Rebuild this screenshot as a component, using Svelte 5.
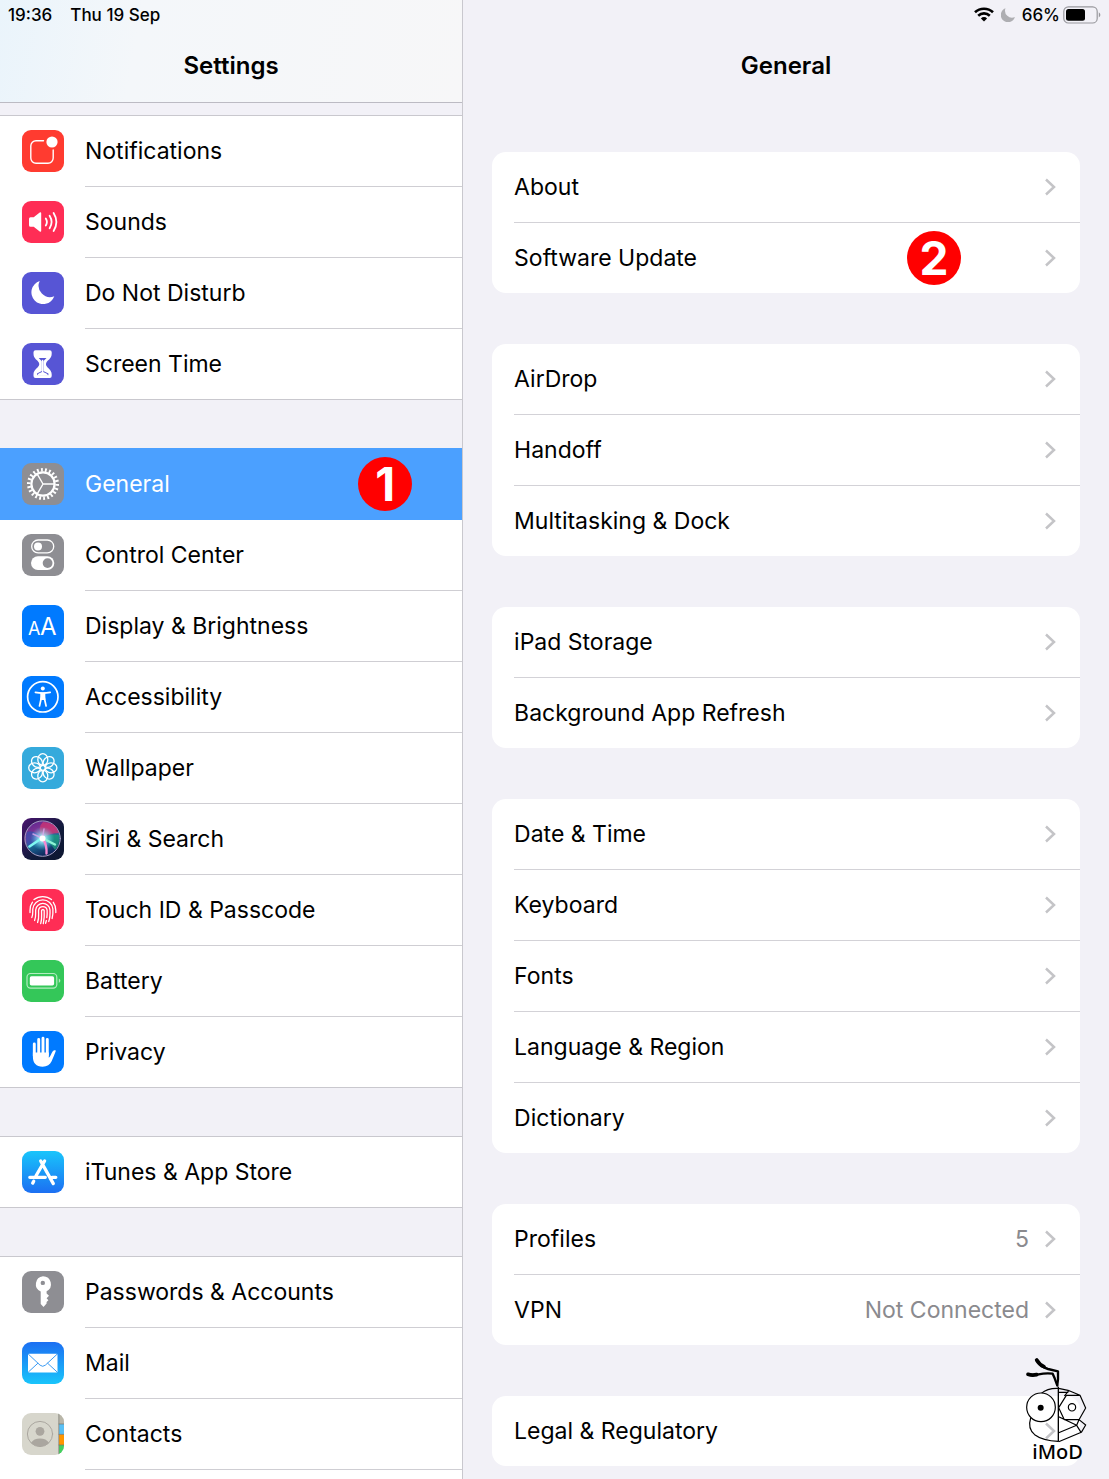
<script lang="ts">
	type Item = { label: string; icon: string; badge?: number };
	type Option = { label: string; value?: string; badge?: number };

	const sections: Item[][] = [
		[
			{ label: "Notifications", icon: "notifications" },
			{ label: "Sounds", icon: "sounds" },
			{ label: "Do Not Disturb", icon: "moon" },
			{ label: "Screen Time", icon: "hourglass" },
		],
		[
			{ label: "General", icon: "gear", badge: 1 },
			{ label: "Control Center", icon: "toggles" },
			{ label: "Display & Brightness", icon: "display" },
			{ label: "Accessibility", icon: "accessibility" },
			{ label: "Wallpaper", icon: "wallpaper" },
			{ label: "Siri & Search", icon: "siri" },
			{ label: "Touch ID & Passcode", icon: "touch" },
			{ label: "Battery", icon: "battery" },
			{ label: "Privacy", icon: "privacy" },
		],
		[{ label: "iTunes & App Store", icon: "appstore" }],
		[
			{ label: "Passwords & Accounts", icon: "key" },
			{ label: "Mail", icon: "mail" },
			{ label: "Contacts", icon: "contacts" },
		],
	];

	const cards: Option[][] = [
		[{ label: "About" }, { label: "Software Update", badge: 2 }],
		[{ label: "AirDrop" }, { label: "Handoff" }, { label: "Multitasking & Dock" }],
		[{ label: "iPad Storage" }, { label: "Background App Refresh" }],
		[
			{ label: "Date & Time" },
			{ label: "Keyboard" },
			{ label: "Fonts" },
			{ label: "Language & Region" },
			{ label: "Dictionary" },
		],
		[
			{ label: "Profiles", value: "5" },
			{ label: "VPN", value: "Not Connected" },
		],
		[{ label: "Legal & Regulatory" }],
	];

	const petals = [0, 45, 90, 135, 180, 225, 270, 315];

	let selected = $state("General");
</script>

{#snippet glyph(icon: string)}
	<svg class="icon {icon}" viewBox="0 0 42 42" fill="none" stroke-linecap="round" aria-hidden="true">
		{#if icon == "notifications"}
			<path d="M21.5 10.8H14a5.2 5.2 0 0 0-5.2 5.2v12a5.2 5.2 0 0 0 5.2 5.2h12a5.2 5.2 0 0 0 5.2-5.2v-8" stroke="#fff" stroke-width="1.4" />
			<circle cx="30" cy="12" r="5.6" fill="#fff" />
		{:else if icon == "sounds"}
			<path d="M8.5 16.3h3.2l6-4.9q1.5-.8 1.5.8v17.6q0 1.6-1.5.8l-6-4.9H8.5Q7 25.7 7 24.2v-6.4q0-1.5 1.5-1.5z" fill="#fff" />
			<path d="M23.8 17.5q2.2 3.5 0 7M27.6 14.8q4 6.2 0 12.4M31.6 12q5.6 9 0 18" stroke="#fff" stroke-width="1.8" />
		{:else if icon == "moon"}
			<path d="M17.7 9A11.8 11.8 0 1 0 32.3 24.3 11.4 11.4 0 0 1 17.7 9z" fill="#fff" />
		{:else if icon == "hourglass"}
			<path d="M13.5 7.3h14.2q2 0 2 2v1.5c0 5-4.3 6.5-5.3 8.7-.6 1.3-.6 2.1 0 3.2 1 2.2 5.3 4 5.3 8.7v1.5q0 2-2 2H13.5q-2 0-2-2v-1.5c0-4.7 4.3-6.5 5.3-8.7.6-1.1.6-1.9 0-3.2-1-2.2-5.3-3.7-5.3-8.7V9.3q0-2 2-2z" fill="#fff" />
			<path d="M16.7 15h7.8l-3.1 3.2V28l5 2.5v1.7H15v-1.7l4.8-2.5v-9.8z" fill="#5755d5" />
			<path d="M20.6 17.5v12" stroke="#fff" stroke-width="1.4" />
			<path d="M14.5 32.8q1.5-2.3 6.1-4 4.6 1.7 6.1 4z" fill="#fff" />
		{:else if icon == "gear"}
			<circle cx="21" cy="21" r="14.2" stroke="#fff" stroke-width="3.6" stroke-linecap="butt" pathLength="44" stroke-dasharray=".9 1.1" />
			<circle cx="21" cy="21" r="11.6" stroke="#fff" stroke-width="2.2" />
			<path d="M21 21h11M21 21l-5.6-9.7M21 21l-5.6 9.7" stroke="#fff" stroke-width="1.4" />
		{:else if icon == "toggles"}
			<rect x="9.7" y="6" width="22" height="12.8" rx="6.4" stroke="#fff" stroke-width="1.3" />
			<circle cx="16" cy="12.4" r="4" fill="#fff" />
			<rect x="9" y="22.2" width="23.3" height="13.8" rx="6.9" fill="#fff" />
			<circle cx="25.6" cy="29.1" r="4.9" fill="#8e8e93" />
		{:else if icon == "display"}
			<text x="6" y="30" font-size="18">A</text>
			<text x="18" y="30" font-size="24">A</text>
		{:else if icon == "accessibility"}
			<circle cx="20.8" cy="20.8" r="15.2" stroke="#fff" stroke-width="1.7" />
			<circle cx="20.8" cy="12.6" r="2" fill="#fff" />
			<path d="M13.4 16.3q7.4 1.6 14.8 0M17.5 30l1.8-8M24.1 30l-1.8-8" stroke="#fff" stroke-width="1.7" />
			<path d="M18.3 16.5h5l.1 7.5h-5.2z" fill="#fff" />
		{:else if icon == "wallpaper"}
			{#each petals as angle}
				<ellipse cx="20.8" cy="12.6" rx="5" ry="5.9" transform="rotate({angle} 20.8 20.8)" stroke="#fff" stroke-width="1.3" />
			{/each}
		{:else if icon == "siri"}
			<defs>
				<linearGradient id="siri-orb" x1=".2" y1="0" x2=".6" y2="1">
					<stop offset="0" stop-color="#5b2590" />
					<stop offset=".4" stop-color="#8c3a96" />
					<stop offset=".6" stop-color="#1b6d97" />
					<stop offset="1" stop-color="#0c1d55" />
				</linearGradient>
				<radialGradient id="siri-glow">
					<stop offset="0" stop-color="#fff" />
					<stop offset=".3" stop-color="#a9f4ff" stop-opacity=".8" />
					<stop offset="1" stop-color="#4cc8ee" stop-opacity="0" />
				</radialGradient>
			</defs>
			<circle cx="20.6" cy="20.6" r="17.7" fill="url(#siri-orb)" stroke="#a7a0c4" stroke-width="1" />
			<path d="M20 20Q15 9 21 4q12 0 16 11-9 0-17 5z" fill="#d8356f" opacity=".7" />
			<path d="M20 20q8-5 17-3 1 10-4 15-5-8-13-12z" fill="#1d9a7e" opacity=".8" />
			<path d="M20 20Q12 11 5 14q-3 8 2 15 4-8 13-9z" fill="#304fb0" opacity=".7" />
			<circle cx="20.5" cy="20.5" r="12" fill="url(#siri-glow)" />
			<path d="M20 20L7.500 28.500" stroke="#7ff8f2" stroke-width="2.600" />
			<path d="M20 20l13 6.500" stroke="#8df5d6" stroke-width="2.400" />
			<path d="M21 21q4 6 3.500 14.500" stroke="#f48ad2" stroke-width="2.400" />
			<path d="M20.500 20l1.500-9M20 20l-9-4" stroke="#dca7ee" stroke-width="1.500" opacity=".8" />
			<circle cx="20.500" cy="20.500" r="3" fill="#fff" />
		{:else if icon == "touch"}
			<g stroke="#fff" stroke-width="1.3">
				<path d="M12 10.6a14 14 0 0 1 17.5 0" />
				<path d="M8 23.5v-2a12.8 12.8 0 0 1 2.5-8.3M31.3 13.3a13 13 0 0 1 2.5 8.2v2" />
				<path d="M9.8 28.5c1.5-3 .7-5.7 1-8.5a10.1 10.1 0 0 1 20.1 0c.2 4 .1 6.5-.8 9.5" />
				<path d="M12.6 31.5c1.7-4 .8-7.5 1.1-10.7a7.2 7.2 0 0 1 14.3 0c.2 5 0 8.5-1.3 11.7" />
				<path d="M15.6 33.5c1.9-5 .7-9 1-12.3a4.3 4.3 0 0 1 8.5 0c.2 3 .1 5.3-.3 7.5" />
				<path d="M18.7 34.6c1.7-5 .6-10 .9-13a1.4 1.4 0 0 1 2.6 0c.3 5 0 9-.9 13M24.4 31.5l-.8 2.8" />
			</g>
		{:else if icon == "battery"}
			<rect x="5" y="13.5" width="29.8" height="14.6" rx="3.6" stroke="#b3ebc0" stroke-width="1.2" />
			<rect x="7.8" y="16.2" width="24.3" height="9.2" rx="1.7" fill="#fff" />
			<path d="M36.8 18.6q3.2 2.2 0 4.4z" fill="#b3ebc0" />
		{:else if icon == "privacy"}
			<path d="M12.3 13v12M16.7 8.5V24M21 7.2V24M25.3 8.5V24" stroke="#fff" stroke-width="2.9" />
			<path d="M10.9 21.5h15.9v5.3c1.8-1.5 2.5-4.3 3.8-6.3.9-1.4 3.7-2 3.1-.2-1.3 3.3-2.6 6.6-4.1 10-1.5 3.5-4.6 5.4-9 5.4-6.4 0-9.7-3.8-9.7-10z" fill="#fff" />
		{:else if icon == "appstore"}
			<path d="M22.6 10l-8.7 15M11.7 30.3l-1 1.8M18.7 10l12.6 22.6M7.8 26.3h15.5M30 26.3h3.8" stroke="#fff" stroke-width="3.3" />
		{:else if icon == "key"}
			<path fill-rule="evenodd" d="M21 5.2a8 8 0 0 1 3.6 15.1v2.2l2.4 2.3-2.4 2.4 1.8 2-1.8 1.9v1.5L21.5 36 18.7 33V20.5A8 8 0 0 1 21 5.2zm-.2 4.5a2.2 2.2 0 1 0 0 4.4 2.2 2.2 0 0 0 0-4.4z" fill="#fff" />
		{:else if icon == "mail"}
			<rect x="6" y="11.7" width="29.5" height="18.7" rx="1.2" fill="#fff" />
			<path d="M6.5 12.3l11.6 10.9q2.6 2.2 5.2 0L35 12.3M6.5 29.9l9.3-8.6M35 29.9l-9.3-8.6" stroke="#3a9bf4" stroke-width="1" />
		{:else if icon == "contacts"}
			<path d="M37 0h5v11h-5z" fill="#b9b6a9" />
			<path d="M37 11h5v10.4h-5z" fill="#5ac0f5" />
			<path d="M37 21.4h5V32h-5z" fill="#ff9500" />
			<path d="M37 32h5v10h-5z" fill="#43d05f" />
			<path d="M36.8 0v42M37 11h5M37 21.4h5M37 32h5" stroke="#77776f" stroke-width=".7" />
			<circle cx="18" cy="21" r="12.6" stroke="#aaa69f" stroke-width="1" />
			<circle cx="18" cy="18.3" r="4.4" fill="#aaa69f" />
			<path d="M9 29.7q2.8-4.3 9-4.3t9 4.3q-3.5 3.8-9 3.8t-9-3.8z" fill="#aaa69f" />
		{/if}
	</svg>
{/snippet}

<div class="screen">
	<aside>
		<header>
			<div class="status">
				<span>19:36</span>
				<span>Thu 19 Sep</span>
			</div>
			<h1>Settings</h1>
		</header>
		<nav>
			{#each sections as section}
				<ul class="section">
					{#each section as item}
						<li>
							<a
								href="#{item.icon}"
								class="item"
								class:selected={selected == item.label}
								onclick={() => (selected = item.label)}
							>
								{@render glyph(item.icon)}
								<span class="label">
									{item.label}
									{#if item.badge}<b class="badge">{item.badge}</b>{/if}
								</span>
							</a>
						</li>
					{/each}
				</ul>
			{/each}
		</nav>
	</aside>

	<main>
		<header>
			<div class="status right">
				<svg class="wifi" viewBox="0 0 20 15" fill="none" stroke="#000" stroke-width="2.6" aria-hidden="true">
					<path d="M1 5.3a13 13 0 0 1 18 0M4.2 8.7a8.4 8.4 0 0 1 11.6 0" />
					<path d="M10 14.6l-3.1-3.2a4.4 4.4 0 0 1 6.2 0z" fill="#000" stroke="none" />
				</svg>
				<svg class="dnd" viewBox="0 0 14 14" aria-hidden="true">
					<path d="M4.5.3a7.2 7.2 0 1 0 9.4 8.8A7 7 0 0 1 4.5.3z" fill="#aeaeb2" />
				</svg>
				<span>66%</span>
				<svg class="power" viewBox="0 0 38 18" aria-hidden="true">
					<rect x=".8" y=".8" width="33.4" height="16.2" rx="4.6" fill="none" stroke="#98989d" stroke-width="1.2" />
					<rect x="3" y="3" width="19" height="11.8" rx="2.5" />
					<path d="M35.8 6.3q3.2 2.6 0 5.2z" fill="#98989d" />
				</svg>
			</div>
			<h2>General</h2>
		</header>
		<div class="cards">
			{#each cards as card}
				<ul class="card">
					{#each card as option}
						<li>
							<a href="#general" class="option">
								<span>{option.label}</span>
								{#if option.badge}<b class="badge">{option.badge}</b>{/if}
								{#if option.value}<span class="value">{option.value}</span>{/if}
								<svg class="chevron" viewBox="0 0 12 20" aria-hidden="true">
									<path d="M2 2.5l8 7.5-8 7.5" fill="none" stroke="#c4c4c7" stroke-width="2.5" />
								</svg>
							</a>
						</li>
					{/each}
				</ul>
			{/each}
		</div>
	</main>

	<svg class="watermark" viewBox="96 48 204 324" fill="none" stroke="#000" stroke-width="3.5" stroke-linejoin="round">
		<g stroke-linecap="round">
			<path d="M142 62q10 19 32 25l30 7v24l-2 16" stroke-width="7" />
			<path d="M140 60q8 14 22 20M114 103q12 4 26 1" stroke-width="11" />
			<path d="M114 103q12 4 32 0 20-4 42-2l6 14 8 22" stroke-width="7" />
		</g>
		<path d="M204 145q-32-1-50 15" />
		<circle cx="153" cy="202" r="43" fill="#fff" />
		<circle cx="152" cy="203" r="9" fill="#000" stroke="none" />
		<path d="M122 234q-10 32 12 50 24 18 71 20" />
		<path d="M205 140v165" stroke-width="4" />
		<path d="M206 145l28 6 36 15 17 38-20 35h-44l-17-36 23-37h41M206 157h29M237 151l-14 17M206 230l54 26-54 22M267 239l20 16-13 22-68 28M260 256l13 21M267 239l-7 17" />
		<circle cx="246" cy="202" r="11" />
		<text x="127" y="358">iMoD</text>
	</svg>
</div>

<style>
	:global(body) {
		background: #f2f1f7;
	}

	.screen {
		color: #000;
		display: grid;
		font-family: Inter, "Liberation Sans", sans-serif;
		font-size: 23px;
		grid-template-columns: 5fr 7fr;
		height: 100vh;
		overflow: hidden;
		position: relative;
	}

	a {
		color: inherit;
		text-decoration: none;
	}

	ul {
		list-style: none;
		margin: 0;
		padding: 0;
	}

	h1,
	h2 {
		font-size: 24px;
		font-weight: 600;
		line-height: 73px;
		margin: 0;
		text-align: center;
	}

	aside {
		display: flex;
		flex-direction: column;
		min-width: 0;
	}

	aside header {
		background: linear-gradient(100deg, #eaf4fb 0%, #f4f7fa 30%, #f7f7f8 100%);
		border-bottom: 1px solid #bcbbc3;
	}

	nav {
		display: flex;
		flex: 1;
		flex-direction: column;
		gap: 48px;
		padding-top: 12px;
	}

	main {
		border-left: 1px solid #c9c8ce;
		min-width: 0;
	}

	.status {
		align-items: center;
		display: flex;
		font-size: 17px;
		font-weight: 500;
		gap: 18px;
		height: 29px;
		padding: 0 8px;
	}

	.status.right {
		gap: 7px;
		justify-content: flex-end;
	}

	.wifi {
		height: 15px;
		width: 20px;
	}

	.dnd {
		height: 14px;
		width: 14px;
	}

	.power {
		height: 18px;
		margin-left: -4px;
		width: 38px;
	}

	.section {
		background: #fff;
		border-bottom: 1px solid #c9c8ce;
		border-top: 1px solid #c9c8ce;
	}

	.section:last-child {
		flex: 1;
	}

	.item {
		align-items: flex-start;
		display: flex;
		gap: 21px;
		padding-left: 22px;
	}

	.label {
		align-items: center;
		border-bottom: 1px solid #cfced3;
		box-sizing: border-box;
		display: flex;
		flex: 1;
		height: 71px;
		justify-content: space-between;
		padding-right: 50px;
	}

	.section:not(:last-child) li:last-child .label {
		border: none;
		height: 70px;
	}

	.selected {
		background: #4ba0ff;
		box-shadow: 0 -1px 0 #4ba0ff;
		color: #fff;
	}

	.selected .label {
		border-color: #4ba0ff;
	}

	.icon {
		border-radius: 9px;
		flex: none;
		height: 42px;
		margin-top: 14px;
		width: 42px;
	}

	.icon text {
		fill: #fff;
	}

	.notifications {
		background: #ff3b30;
	}

	.sounds,
	.touch {
		background: #ff2d55;
	}

	.moon,
	.hourglass {
		background: #5755d5;
	}

	.gear,
	.toggles,
	.key {
		background: #8e8e93;
	}

	.display,
	.accessibility,
	.privacy {
		background: #007aff;
	}

	.wallpaper {
		background: #35aadc;
	}

	.siri {
		background: linear-gradient(135deg, #4a1470, #101a3a 60%, #0d1630);
	}

	.battery {
		background: #34c759;
	}

	.appstore {
		background: linear-gradient(#19c5fb, #1c6ff2);
	}

	.mail {
		background: linear-gradient(#1c6ff2, #19c5fb);
	}

	.contacts {
		background: #d7d6cc;
	}

	.badge {
		background: #f00;
		border-radius: 50%;
		color: #fff;
		flex: none;
		font-size: 46px;
		height: 54px;
		line-height: 54px;
		text-align: center;
		width: 54px;
	}

	.cards {
		display: flex;
		flex-direction: column;
		gap: 51px;
		padding: 50px 29px;
	}

	.card {
		background: #fff;
		border-radius: 14px;
		padding-left: 22px;
	}

	.card li + li {
		border-top: 1px solid #d3d2d7;
	}

	.option {
		align-items: center;
		display: flex;
		height: 70px;
		padding-right: 24px;
	}

	.option span:first-child {
		flex: 1;
	}

	.option .badge {
		margin-right: 83px;
	}

	.value {
		color: #8a8a8e;
		margin-right: 15px;
	}

	.chevron {
		height: 20px;
		width: 12px;
	}

	.watermark {
		bottom: 15px;
		height: 108px;
		position: absolute;
		right: 19px;
		width: 68px;
	}

	.watermark text {
		fill: #000;
		font-family: "Noto Sans", sans-serif;
		font-size: 60px;
		font-weight: 500;
		stroke: none;
	}
</style>
